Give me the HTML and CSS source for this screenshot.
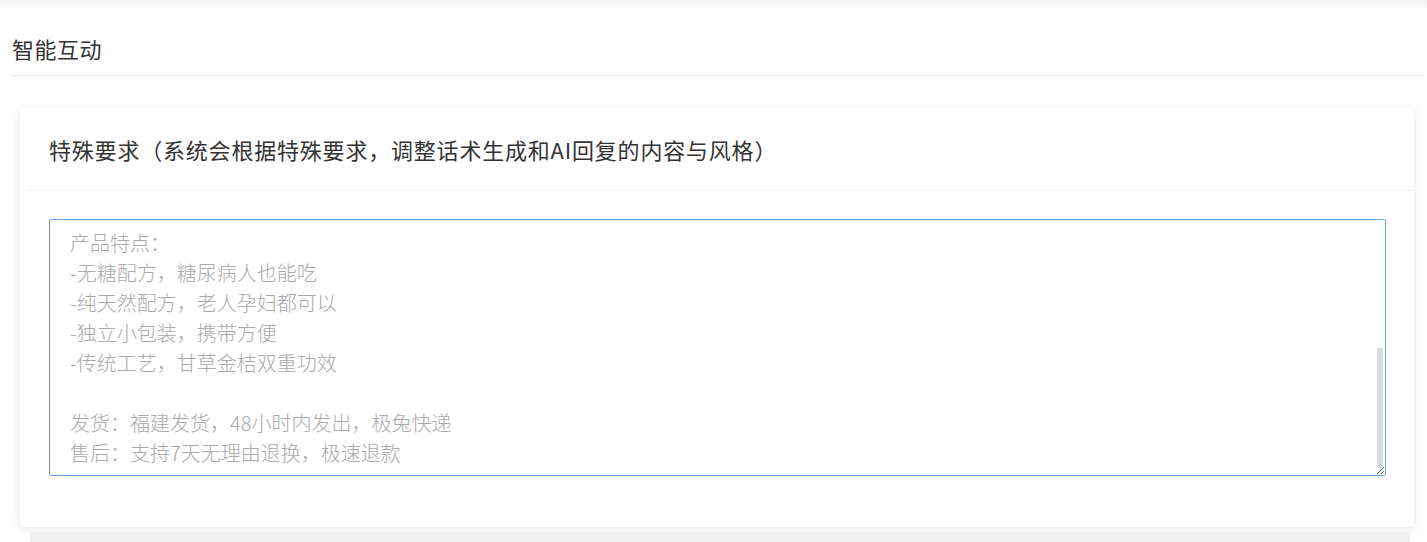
FILE: index.html
```html
<!DOCTYPE html>
<html lang="zh-CN">
<head>
<meta charset="utf-8">
<title>智能互动</title>
<link rel="stylesheet" href="styles.css">
</head>
<body>
<div class="top-shade"></div>
<main class="page">
  <h2 class="section-title">智能互动</h2>
  <section class="card">
    <div class="card-header">特殊要求（系统会根据特殊要求，调整话术生成和AI回复的内容与风格）</div>
    <div class="card-body">
      <div class="field">
        <textarea class="req-input" placeholder="产品特点：&#10;-无糖配方，糖尿病人也能吃&#10;-纯天然配方，老人孕妇都可以&#10;-独立小包装，携带方便&#10;-传统工艺，甘草金桔双重功效&#10;&#10;发货：福建发货，48小时内发出，极兔快递&#10;售后：支持7天无理由退换，极速退款"></textarea>
        <span class="thumb"></span>
      </div>
    </div>
  </section>
  <div class="next-card"></div>
</main>
</body>
</html>
```

FILE: styles.css
```css
html, body {
  margin: 0;
  padding: 0;
  background: #ffffff;
  font-family: "Noto Sans CJK SC", "Noto Sans", sans-serif;
  color: #333333;
  overflow: hidden;
}

.top-shade {
  height: 10px;
  background: linear-gradient(#f2f2f2, #ffffff);
}

.page {
  padding: 0 3px 0 12px;
}

.section-title {
  margin: 0;
  padding: 23px 0 12px 0;
  font-size: 22px;
  letter-spacing: 0.5px;
  font-weight: 400;
  line-height: 30px;
  color: #333333;
  border-bottom: 1px solid #e9e9e9;
}

.card {
  margin: 32px 10px 0 8px;
  background: #ffffff;
  border-radius: 4px;
  box-shadow: 0 2px 10px rgba(0, 0, 0, 0.10);
}

.card-header {
  margin-left: 8px;
  padding: 26px 20px 26px 21px;
  font-size: 22px;
  letter-spacing: 0.8px;
  line-height: 30px;
  color: #333333;
  border-bottom: 1px solid #eeeeee;
}

.card-body {
  padding: 28px 28px 51px 29px;
}

.field {
  position: relative;
}

.req-input {
  display: block;
  box-sizing: border-box;
  width: 100%;
  height: 257px;
  margin: 0;
  padding: 8px 20px;
  font-family: "Noto Sans CJK SC", "Noto Sans", sans-serif;
  font-size: 20px;
  line-height: 30px;
  font-weight: 300;
  color: #333333;
  background: #ffffff;
  border: 1px solid;
  border-color: #5fa3e0 #5fa3e0 #5c9fdc #7f8790;
  border-radius: 3px;
  outline: none;
  resize: vertical;
}

.req-input::placeholder {
  color: #aaaaaa;
}

.thumb {
  position: absolute;
  right: 3px;
  top: 129px;
  width: 6px;
  height: 120px;
  background: #d9d9d9;
  border-radius: 1px;
}

.next-card {
  margin: 4px 14px 0 18px;
  height: 20px;
  background: #f1f1f1;
}
```
